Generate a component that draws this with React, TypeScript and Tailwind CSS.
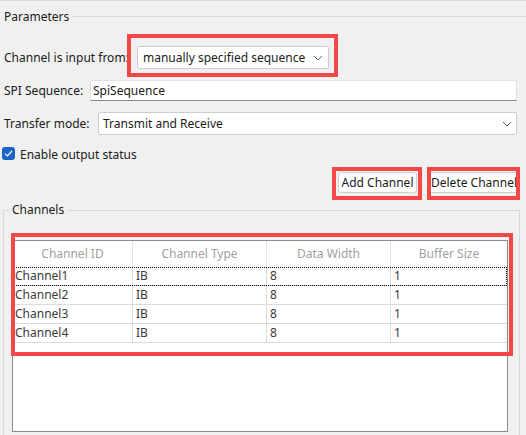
import React from 'react';

type Channel = { id: string; type: string; width: string; buffer: string };

const channels: Channel[] = [
  { id: 'Channel1', type: 'IB', width: '8', buffer: '1' },
  { id: 'Channel2', type: 'IB', width: '8', buffer: '1' },
  { id: 'Channel3', type: 'IB', width: '8', buffer: '1' },
  { id: 'Channel4', type: 'IB', width: '8', buffer: '1' },
];

// grid lines shared by header and body rows
const cols = 'grid grid-cols-[119px_134px_124px_117px]';

const Chevron: React.FC = () => (
  <svg width="10" height="6" viewBox="0 0 10 6" className="shrink-0">
    <path d="M1 1 L5 5 L9 1" fill="none" stroke="#5f5f5f" strokeWidth="1" />
  </svg>
);

// red highlight frame drawn over a control
const Mark: React.FC<{ className: string }> = ({ className }) => (
  <div className={`absolute border-[4px] border-[#f44848] pointer-events-none ${className}`} />
);

const App: React.FC = () => {
  return (
    <div className="w-[526px] h-[435px] overflow-hidden bg-[#f0f0f0] border-t border-[#d9d9d9] flex flex-col text-[12px] text-[#1b1b1b] font-['Noto_Sans',sans-serif]">
      {/* Parameters title */}
      <div className="h-[32px] flex items-center pl-[4px] shrink-0">
        <span className="leading-[16px]">Parameters</span>
        <div className="flex-1 h-px bg-[#d9d9d9] ml-[3px] -mt-[2px]" />
      </div>

      {/* Channel source */}
      <div className="mt-[13px] h-[23px] flex items-center pl-[4px] shrink-0">
        <span className="w-[133px] shrink-0 whitespace-nowrap">Channel is input from:</span>
        <div className="relative">
          <div className="w-[192px] h-[23px] bg-white border border-[#cdcdcd] rounded-[2px] flex items-center justify-between pl-[5px] pr-[5px]">
            <span className="whitespace-nowrap">manually specified sequence</span>
            <Chevron />
          </div>
          <Mark className="-left-[10px] -right-[9px] -top-[12px] -bottom-[8px]" />
        </div>
      </div>

      {/* SPI sequence */}
      <div className="mt-[11px] h-[21px] flex items-center pl-[4px] pr-[9px] shrink-0">
        <span className="w-[86px] shrink-0 whitespace-nowrap">SPI Sequence:</span>
        <div className="flex-1 h-[21px] bg-white border border-[#e2e2e2] border-b-[#8a8a8a] flex items-center pl-[2px]">
          <span>SpiSequence</span>
        </div>
      </div>

      {/* Transfer mode */}
      <div className="mt-[11px] h-[23px] flex items-center pl-[4px] pr-[9px] shrink-0">
        <span className="w-[94px] shrink-0 whitespace-nowrap">Transfer mode:</span>
        <div className="flex-1 h-[23px] bg-white border border-[#cdcdcd] rounded-[2px] flex items-center justify-between pl-[4px] pr-[4px]">
          <span>Transmit and Receive</span>
          <Chevron />
        </div>
      </div>

      {/* Output status */}
      <div className="mt-[12px] h-[13px] flex items-center pl-[2px] gap-[5px] shrink-0">
        <div className="w-[13px] h-[13px] rounded-[3px] bg-[#1c64c8] flex items-center justify-center">
          <svg width="9" height="7" viewBox="0 0 9 7">
            <path d="M1 3.6 L3.4 6 L8 1" fill="none" stroke="white" strokeWidth="1.2" />
          </svg>
        </div>
        <span className="leading-[16px] mt-[3px]">Enable output status</span>
      </div>

      {/* Channel actions */}
      <div className="mt-[12px] h-[21px] flex justify-end items-center pr-[8px] gap-[11px] shrink-0">
        <div className="relative">
          <div className="w-[79px] h-[21px] bg-white border border-[#d0d0d0] rounded-[3px] flex items-center justify-center whitespace-nowrap">
            Add Channel
          </div>
          <Mark className="-left-[6px] -right-[5px] -top-[5px] -bottom-[7px]" />
        </div>
        <div className="relative">
          <div className="w-[90px] h-[21px] bg-white border border-[#d0d0d0] rounded-[3px] flex items-center pl-[2px] whitespace-nowrap">
            Delete Channel
          </div>
          <Mark className="-left-[1px] -right-[2px] -top-[5px] -bottom-[7px]" />
        </div>
      </div>

      {/* Channels group */}
      <fieldset className="mt-[9px] ml-[3px] w-[517px] h-[260px] shrink-0 border border-[#d9d9d9] pl-[8px] pt-[22px]">
        <legend className="-ml-[3px] px-[3px] leading-[16px]">Channels</legend>
        <div className="relative w-[496px]">
          <div className="h-[192px] bg-white border border-[#8a8a8a]">
            <div className={`${cols} h-[26px] text-[#a0a0a0]`}>
              {['Channel ID', 'Channel Type', 'Data Width', 'Buffer Size'].map((h, i) => (
                <div
                  key={h}
                  className={`flex items-center justify-center ${i > 0 ? 'border-l border-[#e3e3e3]' : ''}`}
                >
                  {h}
                </div>
              ))}
            </div>
            {channels.map((c, r) => (
              <div
                key={c.id}
                className={`${cols} h-[19px] border-b border-[#dcdcdc] text-[#3a3a3a] ${
                  r === 0 ? 'outline outline-1 outline-dotted outline-black -outline-offset-1' : ''
                }`}
              >
                {[c.id, c.type, c.width, c.buffer].map((v, i) => (
                  <div
                    key={i}
                    className={`flex items-center leading-[18px] ${i > 0 ? 'border-l border-[#dcdcdc] pl-[3px]' : 'pl-[2px]'}`}
                  >
                    {v}
                  </div>
                ))}
              </div>
            ))}
          </div>
          <Mark className="-left-[1px] -top-[7px] w-[502px] h-[123px]" />
        </div>
      </fieldset>
    </div>
  );
};

export default App;
